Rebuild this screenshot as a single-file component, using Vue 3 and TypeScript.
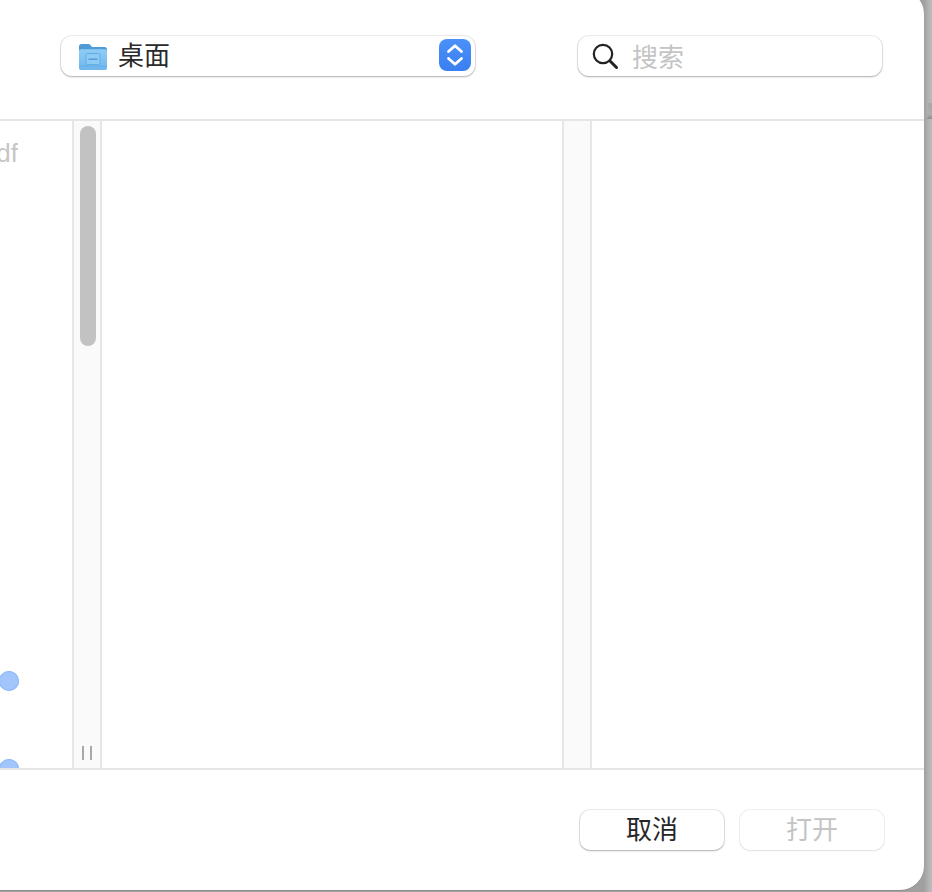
<script setup lang="ts">
const dots: number[] = [0, 1]
</script>

<template>
  <div class="screen">
    <div class="sheet">
      <header class="toolbar">
        <div class="popup">
          <svg class="folder" width="30" height="28" viewBox="0 0 30 28">
            <defs>
              <linearGradient id="fb" x1="0" y1="0" x2="0" y2="1">
                <stop offset="0" stop-color="#8fcdf6" />
                <stop offset="1" stop-color="#6fb6ec" />
              </linearGradient>
            </defs>
            <path d="M1 3.5C1 2.1 2 1 3.4 1h6.8c1 0 1.6.4 2.2 1.1L14 4h12.6C28 4 29 5 29 6.4V12H1z" fill="#4f9bd8" />
            <path d="M1 8.2C1 7 2 6.2 3.2 6.2h23.6C28 6.2 29 7 29 8.2v17C29 26.3 28 27 26.8 27H3.2C2 27 1 26.3 1 25.2z" fill="url(#fb)" />
            <rect x="1" y="22.6" width="28" height="1" fill="#5ba6e0" opacity=".7" />
            <rect x="8" y="10.5" width="14" height="11" rx="1.6" fill="#8ecbf4" stroke="#62ade6" stroke-width="1" />
            <rect x="10.5" y="15.5" width="9" height="1.4" fill="#4f9ad6" />
          </svg>
          <span class="popup-label">桌面</span>
          <span class="stepper">
            <svg width="18" height="24" viewBox="0 0 18 24" fill="none" stroke="#fff" stroke-width="2.8" stroke-linecap="round" stroke-linejoin="round">
              <path d="M2.5 8.5 9 2.8 15.5 8.5" />
              <path d="M2.5 15.5 9 21.2 15.5 15.5" />
            </svg>
          </span>
        </div>
        <div class="search">
          <svg width="28" height="28" viewBox="0 0 28 28" fill="none" stroke="#222" stroke-linecap="round">
            <circle cx="12" cy="12" r="9.2" stroke-width="2.2" />
            <path d="M18.8 18.8 25.5 25.5" stroke-width="3" />
          </svg>
          <span class="search-text">搜索</span>
        </div>
      </header>

      <main class="browser">
        <div class="pane first">
          <div class="file-name"><span>df</span></div>
          <div class="dots">
            <span v-for="d in dots" :key="d" class="dot"></span>
          </div>
        </div>
        <div class="rail">
          <div class="thumb"></div>
          <div class="grip"><i></i><i></i></div>
        </div>
        <div class="pane middle"></div>
        <div class="rail plain"></div>
        <div class="pane last"></div>
      </main>

      <footer class="actions">
        <button class="btn" type="button">取消</button>
        <button class="btn disabled" type="button">打开</button>
      </footer>
    </div>
    <span class="edge-mark"></span>
  </div>
</template>

<style>
html, body { margin: 0; background: #b3b3b3; }
</style>

<style scoped>
.screen {
  position: relative;
  width: 932px;
  height: 892px;
  overflow: hidden;
  background: linear-gradient(90deg, #a0a0a0 0, #a0a0a0 924px, #b8b8b8 930px, #bababa 932px);
  font-family: "Noto Sans CJK SC", "Liberation Sans", sans-serif;
}
.sheet {
  width: 924px;
  height: 900px;
  margin-top: -10px;
  padding-top: 10px;
  box-sizing: border-box;
  background: #fff;
  border-radius: 0 24px 24px 0;
  display: flex;
  flex-direction: column;
  box-shadow: 0 1px 0 #8f8f8f;
}
.toolbar {
  height: 119px;
  flex: none;
  display: flex;
  align-items: flex-start;
  padding: 36px 0 0 61px;
  box-sizing: border-box;
}
.popup {
  width: 414px;
  height: 40px;
  border-radius: 11px;
  background: #fff;
  box-shadow: 0 1px 2px rgba(0, 0, 0, 0.26), 0 0 0 1px #ececec;
  display: flex;
  align-items: center;
  padding: 0 4px 0 17px;
  box-sizing: border-box;
}
.folder { flex: none; margin-top: 1px; }
.popup-label {
  margin-left: 10px;
  padding-bottom: 4px;
  font-size: 26px;
  line-height: 36px;
  color: #2a2a2a;
  flex: 1;
}
.stepper {
  width: 32px;
  height: 32px;
  margin-top: -2px;
  border-radius: 8px;
  background: linear-gradient(#4a90f8, #3a7ff0);
  display: flex;
  align-items: center;
  justify-content: center;
}
.search {
  margin-left: 103px;
  width: 304px;
  height: 40px;
  border-radius: 11px;
  background: #fff;
  box-shadow: 0 1px 2px rgba(0, 0, 0, 0.26), 0 0 0 1px #ececec;
  display: flex;
  align-items: center;
  padding-left: 13px;
  box-sizing: border-box;
}
.search-text {
  margin-left: 13px;
  font-size: 26px;
  line-height: 40px;
  color: #c4c4c4;
}
.browser {
  height: 651px;
  flex: none;
  display: flex;
  border-top: 2px solid #e6e6e6;
  border-bottom: 2px solid #e6e6e6;
  box-sizing: border-box;
}
.pane { min-width: 0; overflow: hidden; background: #fff; }
.first { width: 72px; flex: none; }
.middle { width: 460px; flex: none; }
.last { flex: 1; }
.file-name {
  width: 18px;
  display: flex;
  justify-content: flex-end;
  overflow: hidden;
  margin-top: 14px;
  font-family: "Liberation Sans", sans-serif;
  font-size: 26px;
  line-height: 36px;
  color: #c6c6c6;
}
.dots {
  margin-top: 500px;
  margin-left: -1px;
  display: flex;
  flex-direction: column;
  gap: 68px;
}
.dot {
  width: 20px;
  height: 20px;
  flex: none;
  border-radius: 50%;
  background: #a2c6fb;
  box-shadow: inset 0 0 0 1px #8fb9f8;
}
.rail {
  width: 30px;
  flex: none;
  box-sizing: border-box;
  background: #fafafa;
  border-left: 2px solid #e6e6e6;
  border-right: 2px solid #e6e6e6;
  display: flex;
  flex-direction: column;
  align-items: center;
  padding: 5px 0 0 1px;
}
.thumb {
  width: 16px;
  height: 220px;
  border-radius: 8px;
  background: #c2c2c2;
}
.grip {
  margin-top: auto;
  margin-bottom: 8px;
  margin-left: -1px;
  display: flex;
  gap: 6px;
  height: 14px;
}
.grip i {
  width: 2px;
  height: 14px;
  background: #a8a8a8;
}
.actions {
  flex: none;
  display: flex;
  justify-content: flex-end;
  gap: 16px;
  padding: 40px 40px 0 0;
}
.btn {
  width: 144px;
  height: 40px;
  padding: 0 0 4px;
  border: 0;
  border-radius: 10px;
  background: #fff;
  box-shadow: 0 1px 2px rgba(0, 0, 0, 0.26), 0 0 0 1px #ececec;
  font-family: inherit;
  font-size: 26px;
  line-height: 36px;
  color: #262626;
}
.btn.disabled {
  color: #c4c4c4;
  box-shadow: 0 1px 2px rgba(0, 0, 0, 0.07), 0 0 0 1px #f1f1f1;
}
.edge-mark {
  position: absolute;
  left: 927px;
  top: 103px;
  width: 5px;
  height: 16px;
  background: linear-gradient(#a8a8a8, #aeaeae 70%, #8c8c8c);
  clip-path: polygon(20% 0, 100% 0, 100% 100%, 0 100%, 30% 70%);
}
</style>
